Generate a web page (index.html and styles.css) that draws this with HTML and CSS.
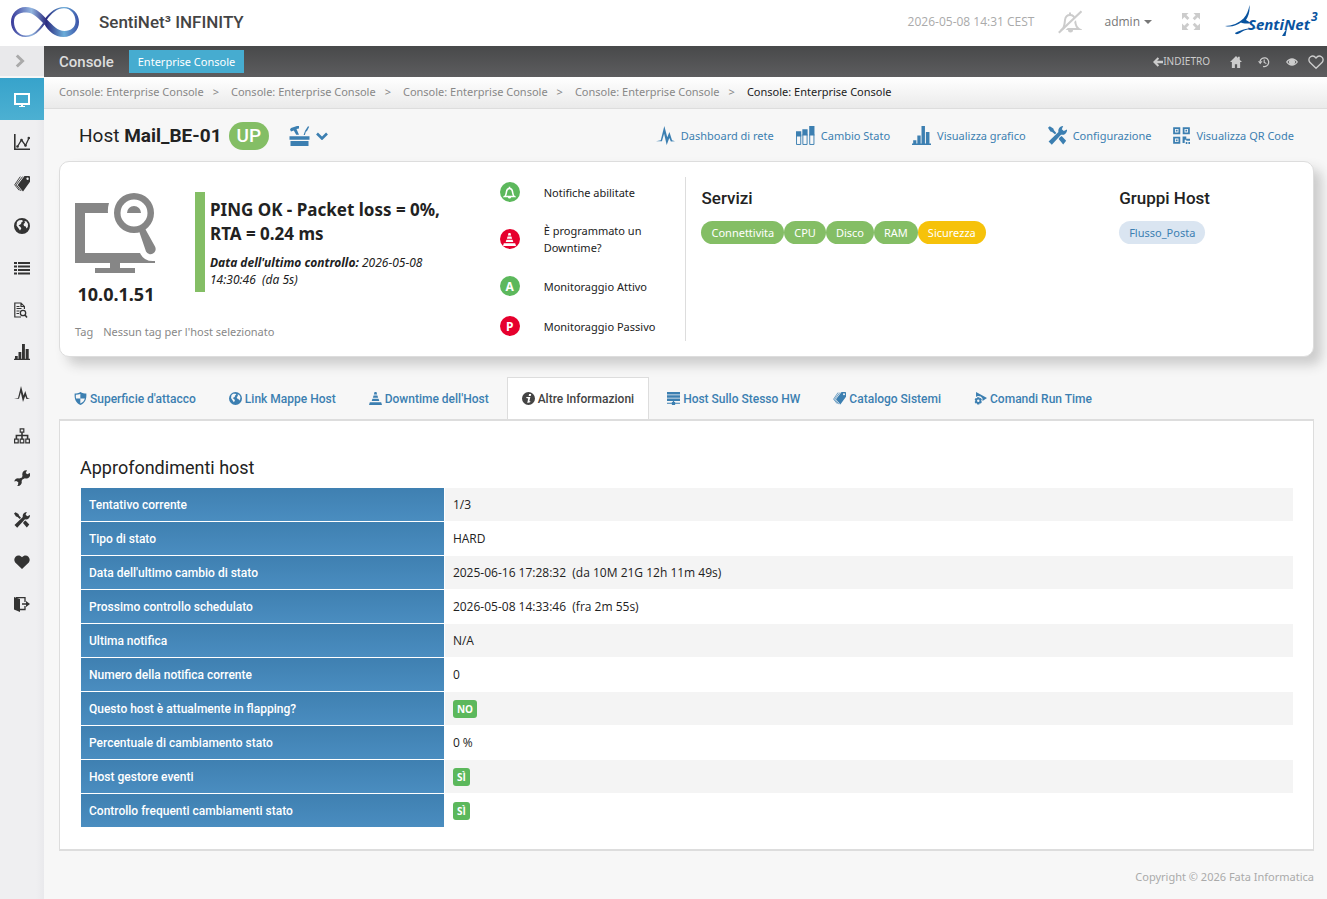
FILE: index.html
```
<!DOCTYPE html>
<html lang="it">
<head>
<meta charset="utf-8">
<meta name="viewport" content="width=device-width, initial-scale=1">
<title>SentiNet³ INFINITY - Host Mail_BE-01</title>
<link rel="stylesheet" href="styles.css">
</head>
<body>
<svg class="sprite" aria-hidden="true">
  <symbol id="i-monitor" viewBox="0 0 16 16"><path d="M1 2h14v10H1z" fill="none" stroke="currentColor" stroke-width="2"/><path d="M7 12h2v2h2v1H5v-1h2z"/></symbol>
  <symbol id="i-line" viewBox="0 0 16 16"><path d="M.8 0v15.2H16" fill="none" stroke="currentColor" stroke-width="1.6"/><path d="M3.500 12.500l4-6.500 4 5.500L15 4" fill="none" stroke="currentColor" stroke-width="1.300"/><circle cx="3.500" cy="12.500" r="1.300"/><circle cx="7.500" cy="6" r="1.300"/><circle cx="11.500" cy="11.500" r="1.300"/><circle cx="14.800" cy="4" r="1.300"/></symbol>
  <symbol id="i-tags" viewBox="0 0 16 16"><path fill-rule="evenodd" d="M10.500 0h4.800l.7.700v5L9 15.500 3.600 9zM13.500 1.600a1.200 1.200 0 1 0 .1 2.400 1.200 1.200 0 0 0-.1-2.400z"/><path d="M8.600.6L2.200 8.800l5 6.200M6.300.6L.7 8.800l4.500 5.600" fill="none" stroke="currentColor" stroke-width=".9"/></symbol>
  <symbol id="i-globe" viewBox="0 0 16 16"><path fill-rule="evenodd" d="M8 0a8 8 0 1 0 0 16A8 8 0 0 0 8 0zM3 4L5 2.200l3-.2 1 1.200-1.500 1L7 6 4.500 7.500 6.500 9l.8 1.500L6 12.500 4.300 10 2.500 7.500zM10.500 3l2 .5 1.500 2.500-.2 3-1.300 1.500-.8-2-1.700-.5-.5-2L11 4.800z"/></symbol>
  <symbol id="i-list" viewBox="0 0 16 14"><path d="M0 1h3v2H0zM4 1h12v2H4zM0 4.500h3v2H0zM4 4.500h12v2H4zM0 8h3v2H0zM4 8h12v2H4zM0 11.500h3v2H0zM4 11.500h12v2H4z"/></symbol>
  <symbol id="i-doc" viewBox="0 0 16 16"><path d="M7 15H.800V1H7l3.400 3.400V7M7 1v3.500h3.400M2.500 6.500h5M2.500 4.500h3M2.500 9h3M2.500 11.500h2.500" fill="none" stroke="currentColor" stroke-width="1.200"/><circle cx="9" cy="11" r="2.700" fill="none" stroke="currentColor" stroke-width="1.300"/><path d="M11 13l2 2.500" stroke="currentColor" stroke-width="1.500"/></symbol>
  <symbol id="i-bars" viewBox="0 0 16 16"><path d="M0 14.800h16V16H0zM1 12h2.700v3H1zM4.500 8h2.800v7H4.500zM8 0h2.900v15H8zM11.700 5h3v10h-3z"/></symbol>
  <symbol id="i-pulse" viewBox="0 0 16 16"><path d="M0 12.800l4-.8L7 0l2.500 9.500L11.300 5l2.200 7 2.500.8-3.500.2-1.300-3L9 16 6.800 6.500 5 12.800z"/></symbol>
  <symbol id="i-tree" viewBox="0 0 16 16"><path d="M6.200.8h3.600v3.400H6.200zM.6 11.200h3.600v3.600H.6zM6.200 11.200h3.600v3.600H6.200zM11.800 11.200h3.600v3.600h-3.600z" fill="none" stroke="currentColor" stroke-width="1.200"/><path d="M8 4.200v7M2.400 11V7.500h11.200V11" fill="none" stroke="currentColor" stroke-width="1.600"/></symbol>
  <symbol id="i-wrench" viewBox="0 0 16 16"><path d="M13 .3a4 4 0 0 0-4.500 5.200L8 7.500 5.200 8.500A3.600 3.600 0 0 0 .3 11.500L2.300 11l2 1.300L4 15l-1 .8a3.800 3.800 0 0 0 4.600-4.800l.8-1.500 2.500-1.300A3.800 3.800 0 0 0 15.800 3l-2.500 1.300L11.700 3z"/></symbol>
  <symbol id="i-tools" viewBox="0 0 16 16"><path d="M12.800 0a4 4 0 0 0-4 5L.5 13l2.700 2.700L11 7.300A4 4 0 0 0 16 3l-2.700 1.300-1.700-1.600z"/><path d="M0 1.500L1.500.3 4.500 2l.5 1.500L7 5.800 5.800 7 3.500 5 2 4.600zM10 9.500l1.500-1 3.800 4-2.500 3L9 11z"/></symbol>
  <symbol id="i-heart" viewBox="0 0 16 16"><path d="M8 15L1.200 8.600C-2 4 4-1.500 8 3.200 12-1.500 18 4 14.800 8.600z"/></symbol>
  <symbol id="i-heart-o" viewBox="0 0 16 16"><path d="M8 14.300L1.800 8.300C-1 4 4.500-.5 8 4 11.500-.5 17 4 14.200 8.300z" fill="none" stroke="currentColor" stroke-width="1.300"/></symbol>
  <symbol id="i-exit" viewBox="0 0 16 16"><path d="M0 1l6 2v13l-6-2.500z"/><path d="M2 1.600h9V6M11 10v3.500H6" fill="none" stroke="currentColor" stroke-width="1.300"/><path d="M8 7.200h4V5l4 3-4 3V8.800H8z"/></symbol>
  <symbol id="i-stack" viewBox="0 0 18 18"><path d="M0 5h5v5H0zM6 3h5v6H6zM12.500 0h5v9h-5z"/><path d="M.5 8v9.500h4V8M6.500 8v9.500h4V8M13 8v9.500h4V8" fill="none" stroke="currentColor" stroke-width=".9"/></symbol>
  <symbol id="i-qr" viewBox="0 0 16 16"><path d="M1 1h5v5H1zM10 1h5v5h-5zM1 10h5v5H1z" fill="none" stroke="currentColor" stroke-width="1.700"/><path d="M2.700 2.700h1.600v1.600H2.700zM11.700 2.700h1.600v1.600h-1.600zM2.700 11.700h1.600v1.600H2.700zM9 9h3.500v2H16v2h-3.500v-1H11v3H9zM12 14h1.500v2H12zM14.500 14H16v2h-1.500z"/></symbol>
  <symbol id="i-shield" viewBox="0 0 16 16"><path fill-rule="evenodd" d="M8 0C6 1.500 3 1.800.8 1.800.3 9 2.500 13.500 8 16c5.500-2.500 7.700-7 7.200-14.200C13 1.800 10 1.500 8 0zM7.800 2.500V8H2.500C2.200 6.500 2.200 5 2.300 3.500c2-.1 3.700-.3 5.500-1zM7.800 8h5.600c-.7 2.700-2.400 4.700-5.600 6.200z"/></symbol>
  <symbol id="i-cone" viewBox="0 0 16 16"><path d="M6.800 0h2.400l.8 3H6zM5.600 4.300h4.800l.8 2.700H4.800zM4.200 8.300h7.600l.9 2.700H3.300zM1 12.500h14l1 3.500H0z"/></symbol>
  <symbol id="i-info" viewBox="0 0 16 16"><path fill-rule="evenodd" d="M8 0a8 8 0 1 0 0 16A8 8 0 0 0 8 0zm.7 2.600h2.600l-.5 2.300H8.200zM5.500 6h4.800L9 11.500l1.300-.3-.3 1.300-3.500 1L7.600 8l-2.500-.6z"/></symbol>
  <symbol id="i-server" viewBox="0 0 16 16"><path d="M0 0h16v3H0zM0 4h16v3H0zM0 8h16v3H0zM7.200 11h1.600v3H7.200zM0 13.200h16v1.200H0zM6 12.300h4V16H6z"/></symbol>
  <symbol id="i-run" viewBox="0 0 16 16"><path d="M2.500 0L16 7.500 10.500 11A5 5 0 0 0 2.500 6z"/><path fill-rule="evenodd" d="M4 6.500h2.500l.5 1.300 1.500-.3 1.200 2-1 1.300 1 1.400-1.200 2-1.500-.3-.5 1.600H4l-.5-1.600-1.500.3-1.200-2 1-1.400-1-1.300 1.200-2 1.500.3zM5.200 9.300a1.500 1.500 0 1 0 .1 3 1.500 1.500 0 0 0-.1-3z"/></symbol>
  <symbol id="i-home" viewBox="0 0 16 16"><path d="M8 0L0 8h2.500v8h4v-5h3v5h4V8H16l-3-3V1h-2.500v1.500z"/></symbol>
  <symbol id="i-history" viewBox="0 0 16 16"><path d="M2.800 7a5.800 5.800 0 1 1 4 6.800" fill="none" stroke="currentColor" stroke-width="1.700"/><path d="M0 7h6L3 11zM7.500 4.500H9V8l2.500 1.500-.7 1.200L7.500 9z"/></symbol>
  <symbol id="i-eye" viewBox="0 0 16 12"><path fill-rule="evenodd" d="M0 6c4-6.500 12-6.500 16 0-4 6.500-12 6.500-16 0zm2 0c1 1.300 2 2.200 3 2.700A4 4 0 0 1 5 3.200C3.800 3.800 2.800 4.800 2 6zm9-2.800a4 4 0 0 1 0 5.500c1-.5 2-1.400 3-2.700-.8-1.200-1.800-2.200-3-2.800z"/></symbol>
  <symbol id="i-back" viewBox="0 0 16 16"><path d="M0 8l7.500-7.500L9.800 2.800 6.500 6H16v4H6.500l3.300 3.200-2.300 2.300z"/></symbol>
  <symbol id="i-bell-off" viewBox="0 0 24 24"><path d="M4.500 19c2-2 2-5 2.500-9 .5-3.500 2.500-5 5-5s4.500 1.500 5 5c.5 4 .5 7 4 9z" fill="none" stroke="currentColor" stroke-width="2"/><path d="M11 2.500h2v3h-2zM10 20h5a2.500 2.500 0 0 1-5 0z"/><path d="M2.500 23.500L24 3" stroke="#fff" stroke-width="2"/><path d="M.8 22.700L23.500 1.200" stroke="currentColor" stroke-width="2.200"/></symbol>
  <symbol id="i-expand" viewBox="0 0 18 17"><path d="M0 0h6.500L4.400 2.100l3 3-2 2-3-3L0 6.500zM18 0v6.500l-2.300-2.300-3 3-2-2 3-3L11.500 0zM0 17v-6.500l2.300 2.300 3-3 2 2-3 3L6.500 17zM18 17h-6.500l2.200-2.200-3-3 2-2 3 3 2.300-2.300z"/></symbol>
  <symbol id="i-bell" viewBox="0 0 16 16"><path d="M2 13c2-1.500 2-4 2.300-6C4.600 4.300 6 3 8 3s3.400 1.300 3.700 4c.3 2 .3 4.500 2.300 6z" fill="none" stroke="currentColor" stroke-width="1.900"/><path d="M7 .8h2V3H7zM6 13.500h4a2 2 0 0 1-4 0z"/></symbol>
  <symbol id="i-toolbox" viewBox="0 0 20 20"><path d="M0 10.200h20v3.600H0zM1 15h18v5H1zM1.500 2L7.500 0h2v2.500L7 3l2.500 5.700H6.700L4.300 4.500 1.500 5.500.5 3.500zM18.500.2l1.200.6-2.300 4.400-1 .3-1 3.500h-1.300l1.500-4.300z"/></symbol>
  <symbol id="i-chevron" viewBox="0 0 12 8"><path d="M1 1.500l5 5 5-5" fill="none" stroke="currentColor" stroke-width="2.600"/></symbol>
  <symbol id="i-right" viewBox="0 0 10 14"><path d="M1.800 1.500L7.500 7l-5.700 5.500" fill="none" stroke="currentColor" stroke-width="3"/></symbol>
  <symbol id="i-search-host" viewBox="0 0 82 82"><path d="M0 11h34q-1.500 5-1 10H10v40h55q4 9 15 8v2H45v5h15v5H20v-5h15v-5H0z"/><path fill-rule="evenodd" d="M59 1a20 20 0 1 0 0 40 20 20 0 0 0 0-40zm0 6.500a13.500 13.500 0 1 1 0 27 13.500 13.500 0 0 1 0-27z"/><path d="M52 21a7 7 0 0 1 14 0zM64 39l6-2.500 10 18a5 5 0 0 1-9 5z"/></symbol>
</svg>

<header class="topbar">
  <a class="brand" href="#">
    <svg class="brand-mark" viewBox="0 0 70 32" aria-hidden="true">
      <defs><linearGradient id="inf-a" x1="0" x2="1"><stop offset="0" stop-color="#38399a"/><stop offset=".3" stop-color="#93b6e0"/><stop offset=".52" stop-color="#2b2b80"/><stop offset=".78" stop-color="#6badd9"/><stop offset="1" stop-color="#3950a6"/></linearGradient></defs>
      <path fill="url(#inf-a)" fill-rule="evenodd" d="M15.500 1C7 1 1 8 1 16s6 15 14.500 15c9 0 14-6 19-12.500 4 6.500 10 12.500 19 12.500S69 24 69 16 63 1 54 1c-8.500 0-13.500 5-18.500 11C30 6 25 1 15.500 1zm1 5.500c6 0 10.500 4.500 16.500 10.500-5 7-10.500 12.500-17 12.500C8.500 29.500 4 23 4 16S8.500 6.500 16.500 6.500zM54 2.300c7 0 11.500 6.500 11.500 12.700S61 25 54.500 25C47.500 25 43 19.500 37 13.500 42 7 47 2.300 54 2.300z"/>
    </svg>
    <span class="brand-name">SentiNet³ INFINITY</span>
  </a>
  <div class="top-tools">
    <time class="clock">2026-05-08 14:31 CEST</time>
    <button class="plain bell" aria-label="Notifiche"><svg class="ic"><use href="#i-bell-off"/></svg></button>
    <button class="plain user">admin <span class="caret"></span></button>
    <button class="plain expand" aria-label="Schermo intero"><svg class="ic"><use href="#i-expand"/></svg></button>
    <svg class="vendor" viewBox="0 0 94 34" role="img" aria-label="SentiNet3"><path d="M0 21c7 0 14-3 18.500-7.500C22 10 23.500 5 24.500 0c.5 6-.8 11-3.500 15l5 3c-4 1-8 .5-10-.5-4 3-10 5-16 3.500zM10 28c8-5 20-6 27-5-9 0-17 1-22 5-2 1.500-5 1.500-5 0zM57 31l5-8-1.500 8z"/><text class="vendor-text" x="23" y="25">SentiNet</text><text class="vendor-text vendor-sup" x="86" y="16">3</text></svg>
  </div>
</header>

<div class="shell">
  <nav class="side" aria-label="Menu principale">
    <button class="side-toggle" aria-label="Espandi menu"><svg class="ic"><use href="#i-right"/></svg></button>
    <a class="side-link current" href="#" aria-label="Console"><svg class="ic"><use href="#i-monitor"/></svg></a>
    <a class="side-link" href="#" aria-label="Grafici"><svg class="ic"><use href="#i-line"/></svg></a>
    <a class="side-link" href="#" aria-label="Tag"><svg class="ic"><use href="#i-tags"/></svg></a>
    <a class="side-link" href="#" aria-label="Mappe"><svg class="ic"><use href="#i-globe"/></svg></a>
    <a class="side-link" href="#" aria-label="Elenchi"><svg class="ic"><use href="#i-list"/></svg></a>
    <a class="side-link" href="#" aria-label="Log"><svg class="ic"><use href="#i-doc"/></svg></a>
    <a class="side-link" href="#" aria-label="Report"><svg class="ic"><use href="#i-bars"/></svg></a>
    <a class="side-link" href="#" aria-label="Rete"><svg class="ic"><use href="#i-pulse"/></svg></a>
    <a class="side-link" href="#" aria-label="Topologia"><svg class="ic"><use href="#i-tree"/></svg></a>
    <a class="side-link" href="#" aria-label="Strumenti"><svg class="ic"><use href="#i-wrench"/></svg></a>
    <a class="side-link" href="#" aria-label="Configurazione"><svg class="ic"><use href="#i-tools"/></svg></a>
    <a class="side-link" href="#" aria-label="Preferiti"><svg class="ic"><use href="#i-heart"/></svg></a>
    <a class="side-link" href="#" aria-label="Esci"><svg class="ic"><use href="#i-exit"/></svg></a>
  </nav>

  <div class="main">
    <div class="console-bar">
      <strong class="console-title">Console</strong>
      <a class="console-tab" href="#">Enterprise Console</a>
      <div class="console-tools">
        <a class="back" href="#"><svg class="ic"><use href="#i-back"/></svg>INDIETRO</a>
        <a href="#" aria-label="Home"><svg class="ic"><use href="#i-home"/></svg></a>
        <a href="#" aria-label="Cronologia"><svg class="ic"><use href="#i-history"/></svg></a>
        <a href="#" aria-label="Visualizza"><svg class="ic"><use href="#i-eye"/></svg></a>
        <a class="fav" href="#" aria-label="Preferito"><svg class="ic"><use href="#i-heart-o"/></svg></a>
      </div>
    </div>
    <nav class="crumbs" aria-label="Percorso">
      <a href="#">Console: Enterprise Console</a><span>&gt;</span>
      <a href="#">Console: Enterprise Console</a><span>&gt;</span>
      <a href="#">Console: Enterprise Console</a><span>&gt;</span>
      <a href="#">Console: Enterprise Console</a><span>&gt;</span>
      <b>Console: Enterprise Console</b>
    </nav>

    <main class="content">
      <div class="host-row">
        <h1 class="host-title"><span>Host <b>Mail_BE-01</b></span><span class="up">UP</span></h1>
        <button class="plain host-menu" aria-label="Azioni host"><svg class="ic box"><use href="#i-toolbox"/></svg><svg class="ic chev"><use href="#i-chevron"/></svg></button>
        <div class="actions">
          <a href="#"><svg class="ic"><use href="#i-pulse"/></svg>Dashboard di rete</a>
          <a href="#"><svg class="ic"><use href="#i-stack"/></svg>Cambio Stato</a>
          <a href="#"><svg class="ic"><use href="#i-bars"/></svg>Visualizza grafico</a>
          <a href="#"><svg class="ic"><use href="#i-tools"/></svg>Configurazione</a>
          <a href="#"><svg class="ic small"><use href="#i-qr"/></svg>Visualizza QR Code</a>
        </div>
      </div>

      <section class="card">
        <div class="card-col host-col">
          <div class="host-state">
            <div class="host-ip"><svg class="ic"><use href="#i-search-host"/></svg><strong>10.0.1.51</strong></div>
            <div class="ping">
              <p class="ping-text">PING OK - Packet loss = 0%, RTA = 0.24 ms</p>
              <p class="ping-date"><b>Data dell'ultimo controllo:</b> 2026-05-08 14:30:46&nbsp; (da 5s)</p>
            </div>
          </div>
          <p class="tags"><span>Tag</span><span>Nessun tag per l'host selezionato</span></p>
        </div>
        <ul class="card-col flags">
          <li><span class="dot ok"><svg class="ic"><use href="#i-bell"/></svg></span>Notifiche abilitate</li>
          <li><span class="dot ko"><svg class="ic"><use href="#i-cone"/></svg></span>È programmato un Downtime?</li>
          <li><span class="dot ok">A</span>Monitoraggio Attivo</li>
          <li><span class="dot ko">P</span>Monitoraggio Passivo</li>
        </ul>
        <div class="card-col services">
          <h2>Servizi</h2>
          <div class="pills"><a class="pill" href="#">Connettivita</a><a class="pill" href="#">CPU</a><a class="pill" href="#">Disco</a><a class="pill" href="#">RAM</a><a class="pill warn" href="#">Sicurezza</a></div>
        </div>
        <div class="card-col groups">
          <h2>Gruppi Host</h2>
          <div class="pills"><a class="pill group" href="#">Flusso_Posta</a></div>
        </div>
      </section>

      <nav class="tabs" aria-label="Dettagli host">
        <a class="tab" href="#"><svg class="ic"><use href="#i-shield"/></svg>Superficie d'attacco</a>
        <a class="tab" href="#"><svg class="ic"><use href="#i-globe"/></svg>Link Mappe Host</a>
        <a class="tab" href="#"><svg class="ic"><use href="#i-cone"/></svg>Downtime dell'Host</a>
        <a class="tab active" href="#"><svg class="ic"><use href="#i-info"/></svg>Altre Informazioni</a>
        <a class="tab" href="#"><svg class="ic"><use href="#i-server"/></svg>Host Sullo Stesso HW</a>
        <a class="tab" href="#"><svg class="ic"><use href="#i-tags"/></svg>Catalogo Sistemi</a>
        <a class="tab" href="#"><svg class="ic"><use href="#i-run"/></svg>Comandi Run Time</a>
      </nav>
      <section class="panel">
        <h2>Approfondimenti host</h2>
        <table class="details">
          <tbody>
            <tr><th scope="row">Tentativo corrente</th><td>1/3</td></tr>
            <tr><th scope="row">Tipo di stato</th><td>HARD</td></tr>
            <tr><th scope="row">Data dell'ultimo cambio di stato</th><td>2025-06-16 17:28:32&nbsp; (da 10M 21G 12h 11m 49s)</td></tr>
            <tr><th scope="row">Prossimo controllo schedulato</th><td>2026-05-08 14:33:46&nbsp; (fra 2m 55s)</td></tr>
            <tr><th scope="row">Ultima notifica</th><td>N/A</td></tr>
            <tr><th scope="row">Numero della notifica corrente</th><td>0</td></tr>
            <tr><th scope="row">Questo host è attualmente in flapping?</th><td><span class="flag">NO</span></td></tr>
            <tr><th scope="row">Percentuale di cambiamento stato</th><td>0 %</td></tr>
            <tr><th scope="row">Host gestore eventi</th><td><span class="flag">SÌ</span></td></tr>
            <tr><th scope="row">Controllo frequenti cambiamenti stato</th><td><span class="flag">SÌ</span></td></tr>
          </tbody>
        </table>
      </section>
      <footer class="foot">Copyright © 2026 Fata Informatica</footer>
    </main>
  </div>
</div>
</body>
</html>
```

FILE: styles.css
```
* { box-sizing: border-box; }
body {
  margin: 0;
  min-height: 100vh;
  display: flex;
  flex-direction: column;
  background: #f7f7f7;
  color: #222;
  font: 11px/17px "Noto Sans", "Open Sans", sans-serif;
}
a { color: inherit; text-decoration: none; }
h1, h2, p, ul { margin: 0; padding: 0; }
.sprite { position: absolute; width: 0; height: 0; }
.ic { width: 16px; height: 16px; fill: currentColor; flex: none; display: block; }
.plain { border: 0; padding: 0; background: none; color: inherit; font: inherit; cursor: pointer; }

.topbar { height: 46px; background: #fff; display: flex; justify-content: space-between; padding: 0 8px 0 10px; }
.brand { display: flex; align-items: center; gap: 19px; padding-bottom: 3px; }
.brand-mark { width: 70px; height: 32px; }
.brand-name { font: 500 17px/20px Roboto, sans-serif; color: #444; }
.top-tools { display: flex; align-items: center; color: #777; padding-bottom: 3px; font: 12px/17px "Open Sans", "Noto Sans", sans-serif; }
.clock { color: #aaa; margin-right: 24px; }
.bell { color: #ccc; margin-right: 22px; }
.bell .ic { width: 24px; height: 24px; }
.user { display: flex; align-items: center; gap: 4px; margin-right: 30px; }
.caret { border: 4px solid transparent; border-top-color: #777; border-bottom: 0; }
.expand { color: #ccc; margin-right: 25px; }
.expand .ic { width: 18px; height: 17px; }
.vendor { width: 94px; height: 34px; fill: #08539f; }
.vendor-text { font: italic 700 15px "Open Sans", sans-serif; fill: #08539f; }
.vendor-sup { font-size: 12px; }

.shell { flex: 1; display: flex; }
.side { width: 44px; flex: none; background: linear-gradient(90deg, #efeff1 36px, #e9e9ec 44px); color: #333; }
.side-toggle { display: block; width: 100%; height: 32px; border: 0; border-bottom: 2px solid #f7f7f7; padding: 0 0 0 15px; background: #e9e9eb; color: #aaa; }
.side-toggle .ic { width: 10px; height: 14px; }
.side-link { height: 42px; display: grid; place-items: center; padding-top: 2px; }
.side-link.current { background: linear-gradient(#37a3cb, #4cb0d2); color: #fff; }

.main { flex: 1; min-width: 0; display: flex; flex-direction: column; }
.console-bar { height: 31px; background: linear-gradient(#48494a, #5d5d5f); display: flex; align-items: center; padding-left: 15px; color: #ddd; }
.console-title { font: 500 15px/20px Roboto, sans-serif; margin-right: 15px; }
.console-tab { background: #46acd0; color: #fff; line-height: 23px; padding: 0 9px; }
.console-tools { margin-left: auto; display: flex; align-items: center; gap: 16px; font-size: 10px; color: #ccc; }
.console-tools .ic { width: 12px; height: 12px; }
.console-tools .back { display: flex; align-items: center; margin-right: 4px; }
.console-tools .back .ic { width: 10px; }
.console-tools .fav .ic { width: 16px; height: 16px; }
.fav { margin: 0 3px 0 -6px; }
.crumbs { height: 32px; background: linear-gradient(#fff, #eaeaea); border-bottom: 1px solid #ddd; display: flex; align-items: center; padding: 0 15px 2px; color: #888; }
.crumbs span { margin: 0 12px 0 9px; }
.crumbs b { font-weight: 400; color: #222; }

.content { padding: 0 13px 0 15px; }
.host-row { display: flex; align-items: center; height: 52px; padding: 2px 20px 0; color: #3c7fb1; }
.host-title { display: flex; align-items: center; gap: 7px; font: 400 19px/28px Roboto, sans-serif; color: #222; }
.host-title b { font-weight: 700; }
.up { background: #84be65; color: #fff; border-radius: 14px; padding: 0 8px; font-weight: 500; }
.host-menu { display: flex; align-items: center; gap: 6px; margin-left: 20px; color: #3c7fb1; }
.host-menu .box { width: 21px; height: 20px; }
.host-menu .chev { width: 12px; height: 8px; }
.actions { margin-left: auto; display: flex; gap: 22px; padding-bottom: 2px; }
.actions a { display: flex; align-items: center; gap: 6px; }
.actions .ic { width: 19px; height: 19px; }
.actions .small { width: 17px; height: 17px; }

.card { display: grid; grid-template-columns: 2fr 1fr 2fr 1fr; background: #fff; border: 1px solid #ddd; border-radius: 10px; box-shadow: 8px 8px 12px #ccc; padding: 15px 0; }
.card-col { padding: 0 15px; min-width: 0; }
.host-col { padding-top: 15px; }
.host-state { display: flex; gap: 38px; }
.host-ip { text-align: center; }
.host-ip .ic { width: 82px; height: 82px; fill: #868686; }
.host-ip strong { display: block; font-size: 18px; line-height: 22px; margin-top: 9px; }
.ping { flex: 0 1 250px; border-left: 10px solid #84be65; padding: 6px 0 0 5px; height: 100px; }
.ping-text { font-size: 17px; line-height: 24px; font-weight: 700; margin-bottom: 8px; }
.ping-date { font-size: 12px; font-style: italic; }
.tags { display: flex; gap: 10px; color: #888; margin-top: 18px; padding-bottom: 1px; }
.flags { list-style: none; padding: 5px 15px 0 22px; display: flex; flex-direction: column; gap: 20px; border-right: 1px solid #ddd; }
.flags li { display: flex; align-items: center; gap: 24px; min-height: 20px; }
.dot { width: 20px; height: 20px; border-radius: 50%; flex: none; display: grid; place-items: center; color: #fff; font-size: 12px; font-weight: 700; }
.dot .ic { width: 13px; height: 13px; }
.ok { background: #5cb85c; }
.ko { background: #e6002d; }
h2 { font: 500 17px/22px Roboto, sans-serif; color: #222; }
.services, .groups { padding-top: 10px; }
.pills { display: flex; flex-wrap: wrap; margin-top: 12px; }
.pill { background: #84be65; color: #fff; border-radius: 12px; line-height: 23px; padding: 0 10px; }
.pill.warn { background: #f6c20a; }
.pill.group { background: #dae5f1; color: #3c7fb1; }

.tabs { display: flex; margin-top: 20px; gap: 3px; color: #3c7fb1; font: 500 12px/16px Roboto, sans-serif; border-bottom: 1px solid #ddd; }
.tab { display: flex; align-items: center; gap: 3px; height: 42px; padding: 0 14px; border: 1px solid transparent; border-bottom: 0; }
.tab .ic { width: 13px; height: 13px; }
.tab.active { background: #fff; border-color: #ddd; color: #444; margin-bottom: -1px; }
.panel { background: #fff; border: 1px solid #ddd; border-bottom-width: 2px; padding: 36px 20px 21px; }
.panel h2 { font-weight: 400; font-size: 18px; margin-bottom: 9px; }
.details { width: 100%; border-collapse: separate; border-spacing: 0; font: 12px/17px "Open Sans", "Noto Sans", sans-serif; }
.details th, .details td { height: 34px; padding: 0 8px; text-align: left; border-bottom: 1px solid #fff; }
.details th { width: 30%; border-left: 1px solid #fff; background: linear-gradient(#3f80b1, #4a8dc0) padding-box; color: #fff; font: 500 12px/16px Roboto, sans-serif; }
.details td { border-left: 1px solid #fff; }
.details tr:nth-child(odd) td { background: #f4f4f4 padding-box; }
.flag { display: inline-block; background: #5cb85c; color: #fff; font-size: 10px; font-weight: 700; line-height: 18px; padding: 0 4px; border-radius: 3px; }
.foot { text-align: right; color: #aaa; padding: 17px 0 14px; }
```
